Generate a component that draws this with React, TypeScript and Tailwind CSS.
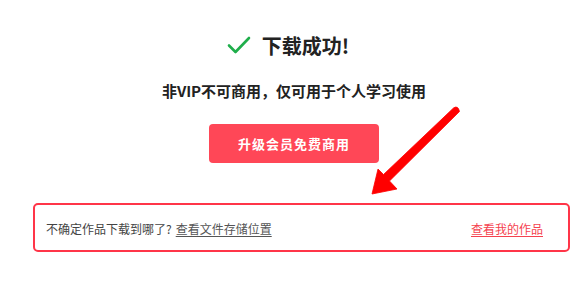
import React from "react";

const font = { fontFamily: '"Noto Sans CJK SC", "Noto Sans", sans-serif' };

const App: React.FC = () => {
  return (
    <div className="relative w-[580px] h-[282px] bg-white overflow-hidden" style={font}>
      <div className="flex flex-col items-center pl-[8px] pt-[32px]">
        {/* Title */}
        <div className="flex items-center h-[28px] pr-[12px]">
          <svg width="24" height="20" viewBox="0 0 24 20" className="mr-[11px] mt-[-2px]">
            <path d="M2 10.5 L8.5 17 L22 3" fill="none" stroke="#1fae4b" strokeWidth="2.6" strokeLinecap="round" strokeLinejoin="round" />
          </svg>
          <h1 className="text-[20px] font-bold leading-[28px] text-[#222]">下载成功!</h1>
        </div>

        <p className="mt-[20px] text-[15px] font-bold leading-[22px] text-[#222]">
          非VIP不可商用，仅可用于个人学习使用
        </p>

        <button className="mt-[22px] w-[170px] h-[39px] rounded-[4px] bg-[#ff4757] text-white text-[13px] font-bold tracking-[1px]">
          升级会员免费商用
        </button>
      </div>

      {/* Notice box */}
      <div className="mt-[40px] ml-[33px] w-[537px] h-[49px] border-2 border-[#ff3548] rounded-[5px] flex items-center justify-between pl-[11px] pr-[25px] pt-[2px] text-[12px]">
        <div className="text-[#444]">
          不确定作品下载到哪了?
          <span className="ml-[4px] underline underline-offset-2 text-[#555]">查看文件存储位置</span>
        </div>
        <span className="underline underline-offset-2 text-[#f5424f]">查看我的作品</span>
      </div>

      {/* Annotation arrow */}
      <svg className="absolute left-0 top-0 pointer-events-none" width="580" height="282" viewBox="0 0 580 282">
        <path d="M453.5 108 Q458 105 459.5 111.5 L389.5 181 L397 189 L372 194 L378 169 L383.5 174.5 Z" fill="#ff0000" stroke="#ff0000" strokeWidth="0.8" strokeLinejoin="round" />
      </svg>
    </div>
  );
};

export default App;
